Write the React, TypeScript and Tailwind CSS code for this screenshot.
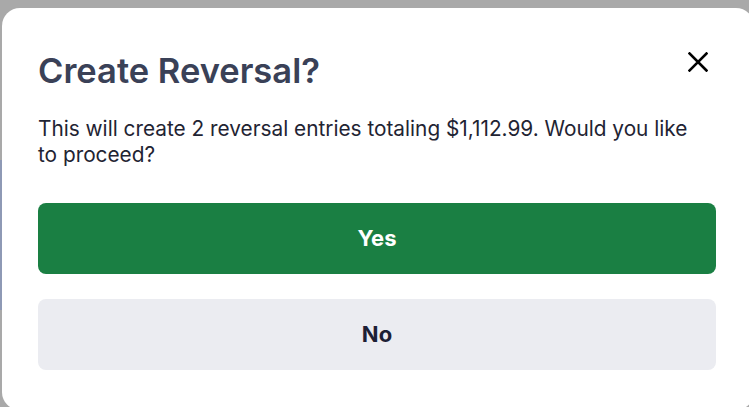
export default function App() {
  return (
    <div className="relative h-[407px] w-[749px] overflow-hidden bg-[#a9a9a9] font-['Inter',sans-serif]">
      <div className="absolute left-0 top-[160px] h-[150px] w-[3px] bg-[#8e99b5]" />
      <div className="absolute left-[2px] top-[8px] w-[752px] rounded-[18px] bg-white pb-[40px] pl-[36px] pr-[38px]">
        <div className="flex items-start justify-between pt-[42px]">
          <h2 className="text-[34.5px] font-semibold leading-[42px] text-[#3a4157]">Create Reversal?</h2>
          <button className="mr-[6px] p-[2px]" aria-label="Close">
            <svg width="20" height="20" viewBox="0 0 20 20" fill="none" stroke="#000" strokeWidth="2.6" strokeLinecap="square">
              <path d="M1.5 1.5L18.5 18.5M18.5 1.5L1.5 18.5" />
            </svg>
          </button>
        </div>
        <p className="mt-[24px] w-[668px] text-[20.8px] leading-[26px] text-[#1f2433]">
          This will create 2 reversal entries totaling $1,112.99. Would you like to proceed?
        </p>
        <div className="mt-[35px] flex w-[678px] flex-col gap-[25px]">
          <button className="h-[71px] rounded-[8px] bg-[#1a7f43] text-[22px] font-bold text-white">Yes</button>
          <button className="h-[71px] rounded-[8px] bg-[#ebecf1] text-[22px] font-bold text-[#1d2035]">No</button>
        </div>
      </div>
    </div>
  );
}
